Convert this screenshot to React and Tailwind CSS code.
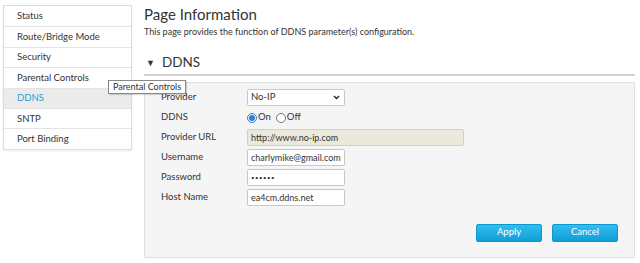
import React from 'react'

const menu = ['Status', 'Route/Bridge Mode', 'Security', 'Parental Controls', 'DDNS', 'SNTP', 'Port Binding']

const Row = ({ label, children }) => (
  <div className="flex items-center h-[20px]">
    <div className="w-[86px] shrink-0">{label}</div>
    {children}
  </div>
)

const Field = ({ value, className = 'w-[98px] text-[9px]' }) => (
  <input
    readOnly
    type="text"
    value={value}
    className={`h-[17px] px-[3px] text-[#333] bg-white border border-[#c8c8c8] rounded-[2px] outline-none ${className}`}
  />
)

export default function App() {
  return (
    <div className="relative w-[640px] h-[263px] bg-white text-[#333] text-[9.5px] flex" style={{ fontFamily: 'Lato, "Open Sans", sans-serif' }}>
      <div className="pl-[3px] pt-[5px] w-[141px] shrink-0">
        <div className="w-[129px] border border-[#dcdcdc] shadow-[0_1px_2px_rgba(0,0,0,0.08)]">
          {menu.map((m, i) => (
            <div
              key={m}
              className={`h-[20.4px] flex items-center pl-[13px] ${i > 0 ? 'border-t border-[#e4e4e4]' : ''} ${m === 'DDNS' ? 'bg-[#ebebeb] text-[#2a9fd6]' : ''}`}
            >
              {m}
            </div>
          ))}
        </div>
      </div>

      <div className="flex-1 pl-[3px] pr-[5px]">
        <div className="text-[15px] leading-none mt-[7px] text-[#333]">Page Information</div>
        <div className="text-[9px] mt-[3px]">This page provides the function of DDNS parameter(s) configuration.</div>
        <div className="flex items-center mt-[16px] ml-[2px] h-[16px]">
          <span className="text-[9px] mr-[7px]">▼</span>
          <span className="text-[13.5px]">DDNS</span>
        </div>
        <div className="mt-[3px] h-[2px] bg-[#d2d2d2]" />
        <div className="mt-[6px] h-[176px] bg-[#f5f5f5] border border-[#e0e0e0] pt-[5px] pl-[16px] relative">
          <Row label="Provider">
            <div className="relative w-[98px] h-[17px] bg-white border border-[#c8c8c8] rounded-[2px] flex items-center px-[3px]">
              <span>No-IP</span>
              <svg className="absolute right-[4px] top-[5px]" width="7" height="5" viewBox="0 0 7 5">
                <path d="M1 1 L3.5 3.5 L6 1" stroke="#222" strokeWidth="1.4" fill="none" />
              </svg>
            </div>
          </Row>
          <Row label="DDNS">
            <div className="flex items-center">
              <span className="w-[10px] h-[10px] rounded-full border border-[#2a7fd6] flex items-center justify-center">
                <span className="w-[6px] h-[6px] rounded-full bg-[#2a7fd6]" />
              </span>
              <span className="ml-[1px]">On</span>
              <span className="ml-[5px] w-[10px] h-[10px] rounded-full border border-[#777] bg-white" />
              <span className="ml-[1px]">Off</span>
            </div>
          </Row>
          <Row label="Provider URL">
            <div className="w-[217px] h-[17px] bg-[#ebe8dc] border border-[#d2d0c6] rounded-[2px] flex items-center px-[3px] text-[9px]">http://www.no-ip.com</div>
          </Row>
          <Row label="Username">
            <Field value="charlymike@gmail.com" />
          </Row>
          <Row label="Password">
            <Field value="••••••" className="w-[98px] text-[6px] tracking-[0.5px]" />
          </Row>
          <Row label="Host Name">
            <Field value="ea4cm.ddns.net" />
          </Row>
          <div className="absolute right-[16px] bottom-[15px] flex gap-[10px]">
            <button className="w-[66px] h-[18px] rounded-[2px] text-white text-[9.5px] bg-gradient-to-b from-[#32bdf0] to-[#0a9fd8] border border-[#0d98cf]">Apply</button>
            <button className="w-[66px] h-[18px] rounded-[2px] text-white text-[9.5px] bg-gradient-to-b from-[#32bdf0] to-[#0a9fd8] border border-[#0d98cf]">Cancel</button>
          </div>
        </div>
      </div>

      <div className="absolute left-[108px] top-[80px] h-[14px] px-[4px] flex items-center bg-white border border-[#888] text-[9px] shadow-[1px_1px_1px_rgba(0,0,0,0.15)]">
        Parental Controls
      </div>
    </div>
  )
}
